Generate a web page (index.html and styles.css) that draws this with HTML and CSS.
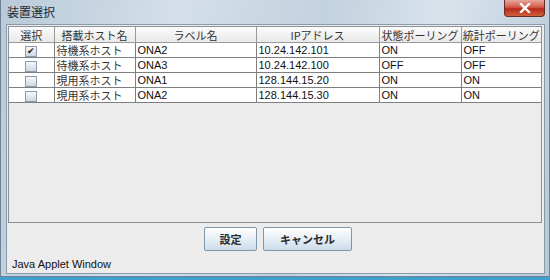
FILE: index.html
```html
<!DOCTYPE html>
<html lang="ja">
<head>
  <meta charset="UTF-8">
  <title>装置選択</title>
  <link rel="stylesheet" href="styles.css">
</head>
<body>

  <div class="window">
    <!-- タイトルバー -->
    <div class="titlebar">
      <span class="title">装置選択</span>
      <span class="close-btn">
        <svg width="12" height="10" viewBox="0 0 12 10">
          <path d="M2 1 L10 9 M10 1 L2 9" stroke="#fff" stroke-width="2.4" stroke-linecap="square"/>
        </svg>
      </span>
    </div>

    <!-- 本体 -->
    <div class="content">
      <div class="table-pane">
        <table class="grid">
          <colgroup>
            <col style="width:45px">
            <col style="width:81px">
            <col style="width:121px">
            <col style="width:123px">
            <col style="width:82px">
            <col>
          </colgroup>
          <thead>
            <tr>
              <th>選択</th>
              <th>搭載ホスト名</th>
              <th>ラベル名</th>
              <th>IPアドレス</th>
              <th>状態ポーリング</th>
              <th>統計ポーリング</th>
            </tr>
          </thead>
          <tbody>
            <tr>
              <td class="chk"><span class="checkbox checked">✔</span></td>
              <td class="jp">待機系ホスト</td>
              <td>ONA2</td>
              <td>10.24.142.101</td>
              <td>ON</td>
              <td>OFF</td>
            </tr>
            <tr>
              <td class="chk"><span class="checkbox"></span></td>
              <td class="jp">待機系ホスト</td>
              <td>ONA3</td>
              <td>10.24.142.100</td>
              <td>OFF</td>
              <td>OFF</td>
            </tr>
            <tr>
              <td class="chk"><span class="checkbox"></span></td>
              <td class="jp">現用系ホスト</td>
              <td>ONA1</td>
              <td>128.144.15.20</td>
              <td>ON</td>
              <td>ON</td>
            </tr>
            <tr>
              <td class="chk"><span class="checkbox"></span></td>
              <td class="jp">現用系ホスト</td>
              <td>ONA2</td>
              <td>128.144.15.30</td>
              <td>ON</td>
              <td>ON</td>
            </tr>
          </tbody>
        </table>
      </div>

      <div class="buttons">
        <button class="btn btn-ok">設定</button>
        <button class="btn btn-cancel">キャンセル</button>
      </div>

      <div class="status">Java Applet Window</div>
    </div>
  </div>

</body>
</html>
```

FILE: styles.css
```css
html, body {
  margin: 0;
  padding: 0;
}
body {
  width: 550px;
  height: 280px;
  background: #3f9fcf;
  font-family: "Liberation Sans", "Noto Sans CJK JP", sans-serif;
  overflow: hidden;
}
.window {
  width: 550px;
  height: 277px;
  box-sizing: border-box;
  padding: 0 4px 2px 5px;
  display: flex;
  flex-direction: column;
  background: linear-gradient(100deg, #b9cad9 0%, #d4dfe9 30%, #c3d2df 55%, #d9e3ec 75%, #b7c8d7 100%);
  border: 1px solid #6e8194;
  border-top: none;
}
.titlebar {
  height: 24px;
  display: flex;
  align-items: flex-start;
  justify-content: space-between;
}
.title {
  margin: 5px 0 0 1px;
  font-family: "Noto Sans CJK JP", sans-serif;
  font-size: 12px;
  line-height: 14px;
  color: #1e2a36;
}
.close-btn {
  width: 39px;
  height: 16px;
  display: flex;
  align-items: center;
  justify-content: center;
  border: 1px solid #6c2a24;
  border-top: none;
  border-radius: 0 0 4px 4px;
  background: linear-gradient(#e8a89c 0%, #d3594a 45%, #b8281a 55%, #d0603e 100%);
}
.content {
  flex: 1;
  display: flex;
  flex-direction: column;
  background: #ececec;
  border: 1px solid #8a9aab;
  padding: 1px 2px 0 1px;
}
.table-pane {
  height: 195px;
  background: #ececec;
  border: 1px solid #8c9196;
}
.grid {
  width: 100%;
  table-layout: fixed;
  border-collapse: collapse;
  font-size: 11px;
}
.grid th {
  height: 15px;
  padding: 0;
  font-weight: normal;
  font-family: "Noto Sans CJK JP", sans-serif;
  color: #333;
  line-height: 14px;
  background: linear-gradient(#fbfbfb, #e9e9e9);
  border-right: 1px solid #9a9a9a;
  border-bottom: 1px solid #9a9a9a;
  text-align: center;
  white-space: nowrap;
  overflow: hidden;
}
.grid th:last-child {
  border-right: none;
}
.grid td {
  height: 14px;
  padding: 0 0 0 2px;
  line-height: 14px;
  background: #fff;
  color: #111;
  border: 1px solid #7f7f7f;
  white-space: nowrap;
  overflow: hidden;
}
.grid td.jp {
  font-family: "Noto Sans CJK JP", sans-serif;
  color: #333;
}
.grid td:first-child {
  border-left: none;
}
.grid td:last-child {
  border-right: none;
}
.grid td.chk {
  padding: 0;
  text-align: center;
}
.checkbox {
  display: inline-block;
  width: 10px;
  height: 9px;
  vertical-align: middle;
  border: 1px solid #8d9cab;
  background: linear-gradient(#f6f9fc, #cbd8e4);
  font-size: 9px;
  line-height: 9px;
  color: #222;
  text-align: center;
}
.buttons {
  display: flex;
  justify-content: center;
  gap: 6px;
  margin-top: 4px;
  padding-left: 6px;
}
.btn {
  height: 24px;
  padding: 0;
  font-family: "Noto Sans CJK JP", sans-serif;
  font-size: 11px;
  font-weight: bold;
  color: #2a2a2a;
  border: 1px solid #7f95a8;
  border-radius: 2px;
  background: linear-gradient(#ffffff 0%, #e9f0f6 45%, #cddcea 100%);
}
.btn-ok {
  width: 53px;
}
.btn-cancel {
  width: 89px;
}
.status {
  margin-top: auto;
  padding: 0 0 2px 4px;
  font-size: 11px;
  line-height: 13px;
  color: #111;
}
```
